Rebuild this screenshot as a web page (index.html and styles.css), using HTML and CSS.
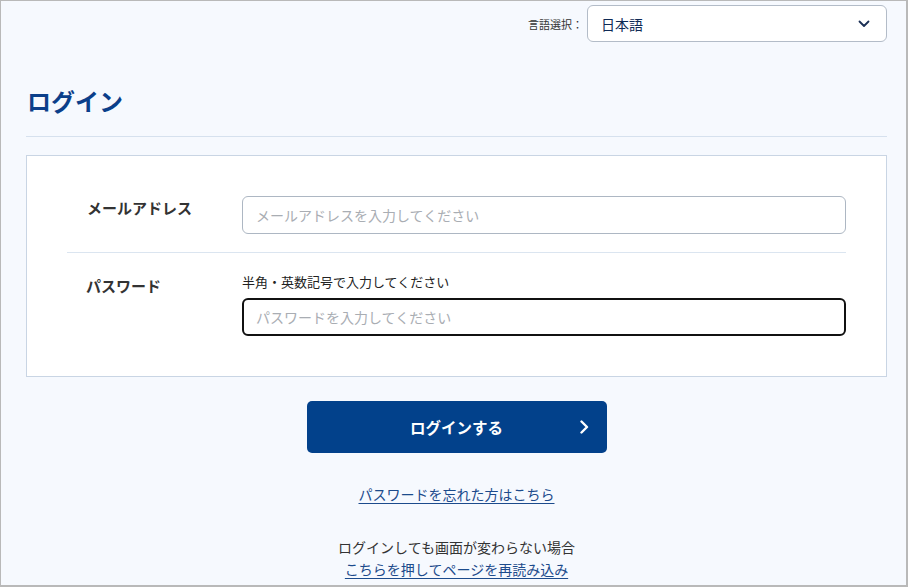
FILE: index.html
```html
<!DOCTYPE html>
<html lang="ja">
<head>
<meta charset="utf-8">
<title>ログイン</title>
<link rel="stylesheet" href="styles.css">
</head>
<body>
<div class="page">
  <header class="topbar">
    <span class="lang-label">言語選択：</span>
    <div class="lang-select">
      <span class="lang-value">日本語</span>
      <svg class="lang-chev" width="12" height="8" viewBox="0 0 12 8"><path d="M1.5 1.5 L6 6 L10.5 1.5" fill="none" stroke="#1b2f55" stroke-width="1.8" stroke-linecap="round" stroke-linejoin="round"/></svg>
    </div>
  </header>

  <h1 class="title">ログイン</h1>

  <section class="card">
    <div class="row row-mail">
      <label class="label label-mail" for="mail">メールアドレス</label>
      <div class="field">
        <input class="input" id="mail" type="text" placeholder="メールアドレスを入力してください">
      </div>
    </div>
    <div class="row row-pass">
      <label class="label label-pass" for="pass">パスワード</label>
      <div class="field">
        <p class="hint">半角・英数記号で入力してください</p>
        <input class="input input-focus" id="pass" type="password" placeholder="パスワードを入力してください" autofocus>
      </div>
    </div>
  </section>

  <div class="actions">
    <button class="btn" type="button">
      <span class="btn-text">ログインする</span>
      <svg class="btn-chev" width="10" height="14" viewBox="0 0 10 14"><path d="M2.5 1.5 L8 7 L2.5 12.5" fill="none" stroke="#fff" stroke-width="2.4" stroke-linecap="round" stroke-linejoin="round"/></svg>
    </button>
    <a class="link forgot" href="#">パスワードを忘れた方はこちら</a>
    <p class="note">ログインしても画面が変わらない場合</p>
    <a class="link reload" href="#">こちらを押してページを再読み込み</a>
  </div>
</div>
</body>
</html>
```

FILE: styles.css
```css
html, body {
  margin: 0;
  padding: 0;
  background: #b9b9b9;
}
body {
  font-family: "Noto Sans CJK JP", "Noto Sans", sans-serif;
  color: #333;
  overflow: hidden;
}
.page {
  margin: 1px 0 0 1px;
  width: 905px;
  height: 584px;
  box-sizing: border-box;
  background: #f6f9fe;
  padding: 0 19px 0 25px;
  overflow: hidden;
}
.topbar {
  display: flex;
  justify-content: flex-end;
  align-items: center;
  padding-top: 4px;
  gap: 4px;
}
.lang-label {
  font-size: 11px;
  color: #333;
  line-height: 16px;
}
.lang-select {
  width: 300px;
  height: 37px;
  box-sizing: border-box;
  border: 1px solid #b3bcc8;
  border-radius: 6px;
  background: #fff;
  display: flex;
  align-items: center;
  justify-content: space-between;
  padding: 0 16px 0 13px;
}
.lang-value {
  font-size: 14px;
  color: #0f2a55;
}
.lang-chev {
  display: block;
}
.title {
  margin: 42px 0 0;
  padding: 0 0 18px 1px;
  font-size: 24px;
  line-height: 34px;
  font-weight: 700;
  color: #0b3f8a;
  border-bottom: 1px solid #d6e1ee;
}
.card {
  margin-top: 18px;
  background: #fff;
  border: 1px solid #c9d5e4;
  padding: 40px 40px 40px 40px;
}
.row {
  display: flex;
}
.row-mail {
  padding-bottom: 18px;
  border-bottom: 1px solid #dbe5f0;
}
.row-pass {
  padding-top: 19px;
}
.label {
  width: 175px;
  flex: none;
  box-sizing: border-box;
  padding-left: 20px;
  font-size: 15px;
  font-weight: 700;
  line-height: 20px;
  color: #333;
}
.label-mail {
  margin-top: 2px;
}
.label-pass {
  margin-top: 4px;
  padding-left: 19px;
}
.field {
  flex: 1;
  display: flex;
  flex-direction: column;
}
.hint {
  margin: 0 0 7px;
  font-size: 13px;
  line-height: 19px;
  color: #222;
}
.input {
  height: 38px;
  box-sizing: border-box;
  width: 100%;
  border: 1px solid #adb7c3;
  border-radius: 6px;
  padding: 0 13px;
  font-family: inherit;
  font-size: 14px;
  color: #333;
  background: #fff;
  outline: none;
}
.input::placeholder {
  color: #a9adb3;
}
.input-focus {
  border: 2px solid #111;
  padding: 0 12px;
}
.actions {
  display: flex;
  flex-direction: column;
  align-items: center;
}
.btn {
  margin-top: 24px;
  width: 300px;
  height: 52px;
  border: none;
  border-radius: 5px;
  background: #02418b;
  display: flex;
  align-items: center;
  justify-content: center;
  position: relative;
  font-family: inherit;
  cursor: pointer;
}
.btn-text {
  font-size: 15.5px;
  font-weight: 700;
  color: #fff;
}
.btn-chev {
  position: absolute;
  right: 18px;
  top: 19px;
}
.link {
  font-size: 14px;
  line-height: 20px;
  color: #1c4b8c;
  text-decoration: underline;
  text-underline-offset: 3px;
}
.forgot {
  margin-top: 31px;
}
.note {
  margin: 32px 0 0;
  font-size: 14px;
  line-height: 22px;
  color: #333;
}
.reload {
  line-height: 22px;
}
```
